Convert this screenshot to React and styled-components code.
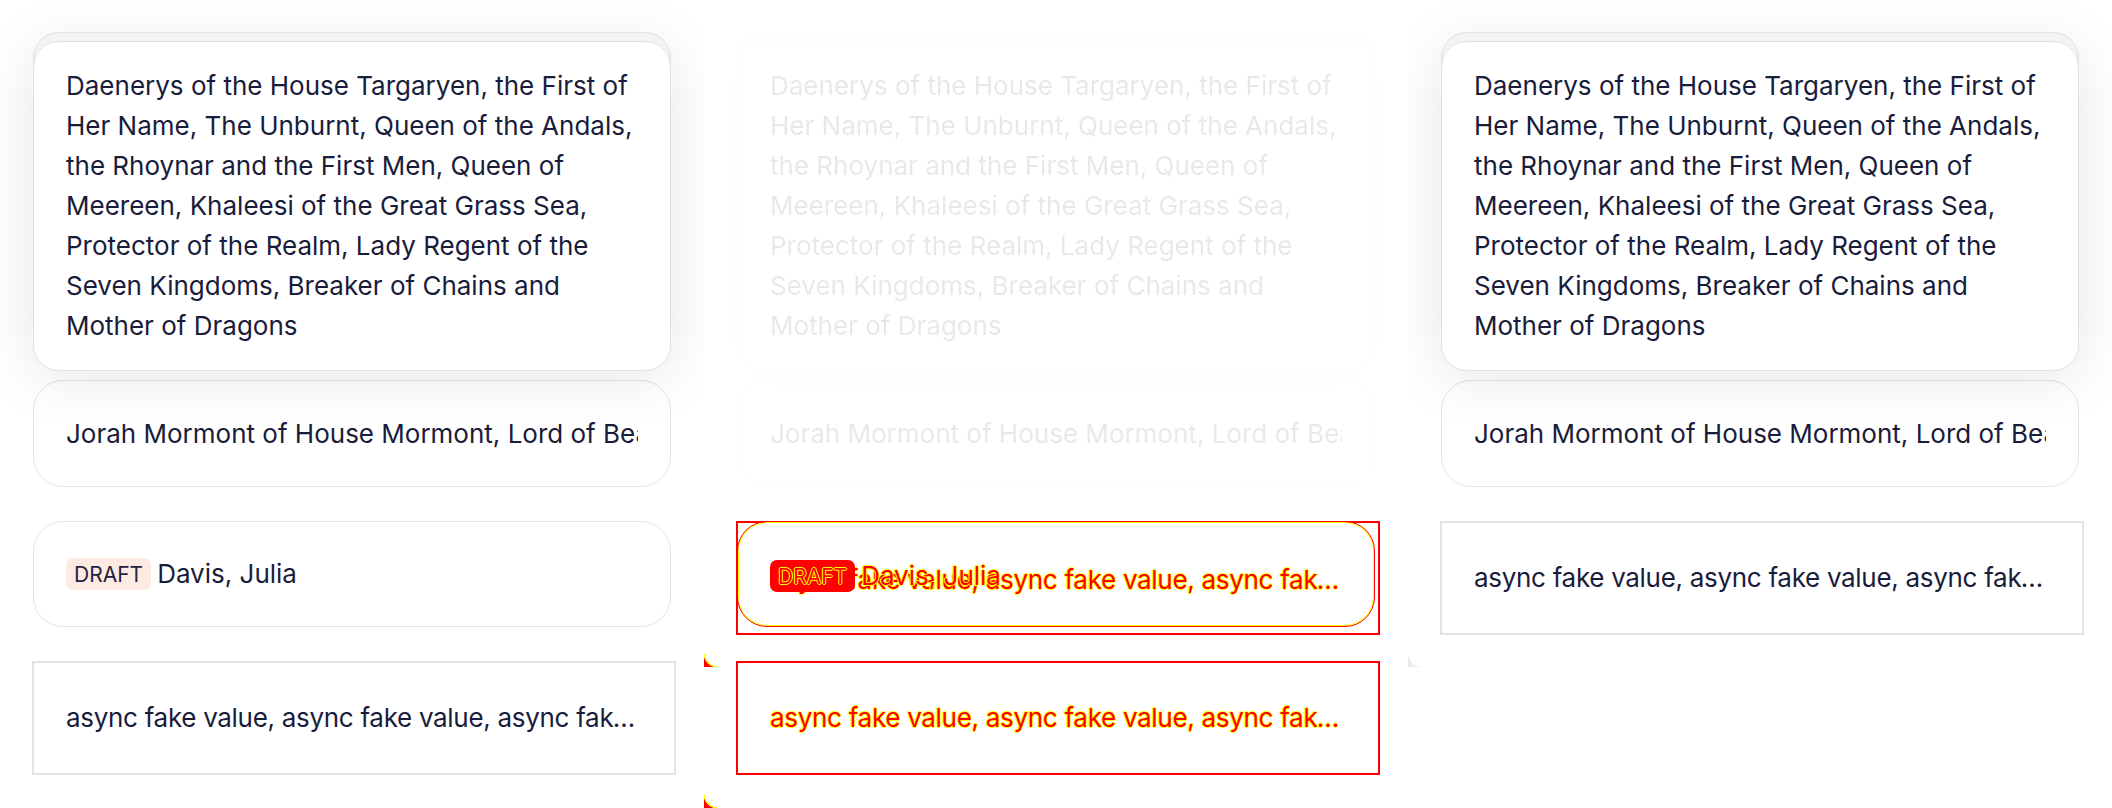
import React from 'react';
import styled, { createGlobalStyle } from 'styled-components';

const GlobalStyle = createGlobalStyle`
  html, body {
    margin: 0;
    background: #ffffff;
  }
  body {
    font-family: Inter, 'Noto Sans', sans-serif;
    overflow: hidden;
  }
`;

const Page = styled.div`
  display: flex;
  align-items: flex-start;
  width: 2112px;
  height: 808px;
  overflow: hidden;
`;

const Frame = styled.div`
  flex: none;
  width: 704px;
  height: ${p => p.$height}px;
  background: #ebebeb;
`;

const Panel = styled.div`
  position: relative;
  box-sizing: border-box;
  height: 100%;
  padding: 41px 0 0 33px;
  display: flex;
  flex-direction: column;
  align-items: flex-start;
  background: #ffffff;
  border-bottom-left-radius: 14px;
  overflow: hidden;
`;

const Faded = styled.div`
  display: flex;
  flex-direction: column;
  align-items: flex-start;
  opacity: 0.1;
`;

const Text = styled.div`
  font-size: 26px;
  line-height: 40px;
  color: #191c3a;
`;

const Card = styled(Text)`
  box-sizing: border-box;
  width: 638px;
  background: #ffffff;
  border: 1px solid #e3e3e3;
  border-radius: 30px;
`;

const StackCard = styled(Card)`
  position: relative;
  z-index: 1;
  padding: 24px 32px;
  border-radius: 26px;
  box-shadow:
    0 -9px 0 -1px #f3f3f3,
    0 -9px 0 0 #e2e2e2,
    0 6px 60px rgba(0, 0, 0, 0.1);
`;

const LineCard = styled(Card)`
  margin-top: ${p => p.$gap}px;
  padding: 33px 32px 32px;
`;

const Clip = styled.div`
  white-space: nowrap;
  overflow: hidden;
`;

const DraftCard = styled(Card)`
  margin-top: 34px;
  padding: 32px;
  display: flex;
  align-items: center;
  gap: 6px;
`;

const Badge = styled.span`
  display: inline-block;
  flex: none;
  height: 32px;
  padding: 0 8px;
  border-radius: 7px;
  background: ${p => (p.$diff ? '#ff0000' : '#fdeae3')};
  font-size: 21px;
  line-height: 33px;
  color: #1f2340;
`;

const ValueBox = styled(Text)`
  box-sizing: border-box;
  width: 644px;
  margin: ${p => p.$gap}px 0 0 -1px;
  padding: 35px 32px;
  border: 2px solid #e3e3e3;
  letter-spacing: -0.3px;
  white-space: nowrap;
  overflow: hidden;
  text-overflow: ellipsis;
`;

const DiffBox = styled.div`
  box-sizing: border-box;
  display: grid;
  width: 644px;
  height: 114px;
  margin: ${p => p.$gap}px 0 0 -1px;
  box-shadow: inset 0 0 0 2px #ff0000;

  & > * {
    grid-area: 1 / 1;
  }
`;

const DiffOutline = styled.div`
  box-sizing: border-box;
  width: 638px;
  height: 106px;
  margin-left: 1px;
  border: 1px solid #ff0000;
  border-radius: 30px;
  box-shadow: inset 0 0 0 1px #ffff00;
`;

const DiffText = styled(Text)`
  box-sizing: border-box;
  width: 644px;
  padding: 0 34px;
  margin-top: ${p => p.$top}px;
  color: #ff0000;
  letter-spacing: -0.3px;
  white-space: nowrap;
  overflow: hidden;
  text-overflow: ellipsis;
  text-shadow: 1px 0 #ffff00, -1px 0 #ffff00, 0 1px #ffff00, 0 -1px #ffff00;
`;

const DiffRow = styled(DiffText)`
  display: flex;
  align-items: center;
  gap: 6px;
  height: 32px;
  line-height: 32px;
  letter-spacing: 0;

  ${Badge} {
    color: #ff0000;
  }
`;

const CornerMark = styled.div`
  position: absolute;
  left: 0;
  top: ${p => p.$top}px;
  width: 13px;
  height: 13px;
  background: radial-gradient(circle at 100% 0, transparent 12px, #ffff00 12px, #ffff00 13px, #ff0000 13.5px);
`;

const longTitle =
  'Daenerys of the House Targaryen, the First of Her Name, The Unburnt, Queen of the Andals, the Rhoynar and the First Men, Queen of Meereen, Khaleesi of the Great Grass Sea, Protector of the Realm, Lady Regent of the Seven Kingdoms, Breaker of Chains and Mother of Dragons';
const jorah = 'Jorah Mormont of House Mormont, Lord of Bear Island, Knight of the Realm';
const asyncValue = 'async fake value, async fake value, async fake value, async fake value';

const TopCards = () => (
  <>
    <StackCard>{longTitle}</StackCard>
    <LineCard $gap={9}>
      <Clip>{jorah}</Clip>
    </LineCard>
  </>
);

const App = () => (
  <Page>
    <GlobalStyle />
    <Frame $height={830}>
      <Panel>
        <TopCards />
        <DraftCard>
          <Badge>DRAFT</Badge>
          Davis, Julia
        </DraftCard>
        <ValueBox $gap={34}>{asyncValue}</ValueBox>
      </Panel>
    </Frame>

    <Frame $height={830}>
      <Panel>
        <Faded>
          <TopCards />
        </Faded>
        <DiffBox $gap={34}>
          <DiffOutline />
          <DiffText $top={39}>{asyncValue}</DiffText>
          <DiffRow $top={39}>
            <Badge $diff>DRAFT</Badge>
            Davis, Julia
          </DiffRow>
        </DiffBox>
        <DiffBox $gap={26}>
          <DiffText $top={37}>{asyncValue}</DiffText>
        </DiffBox>
        <CornerMark $top={654} />
        <CornerMark $top={795} />
      </Panel>
    </Frame>

    <Frame $height={667}>
      <Panel>
        <TopCards />
        <ValueBox $gap={34}>{asyncValue}</ValueBox>
      </Panel>
    </Frame>
  </Page>
);

export default App;
